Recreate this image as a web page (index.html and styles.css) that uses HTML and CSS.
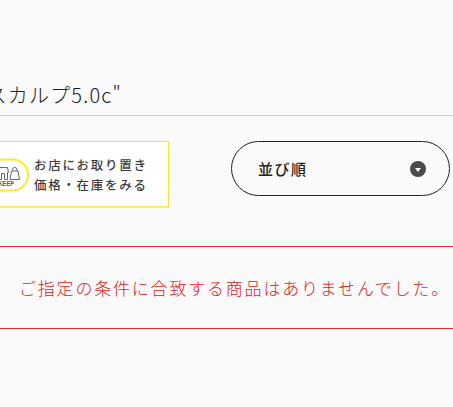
FILE: index.html
```
<!DOCTYPE html>
<html lang="ja">
<head>
    <meta charset="UTF-8">
    <title>検索結果</title>
    <link rel="stylesheet" href="styles.css">
</head>
<body>
    <h1 class="search-title"><span>スカルプ5.0c"</span></h1>

    <div class="toolbar">
        <a class="keep-banner">
            <svg class="keep-icon" viewBox="0 0 30 34" width="30" height="34">
                <rect x="-34" y="1.5" width="62" height="31" rx="15.5" fill="#fff" stroke="#ffe833" stroke-width="2"/>
                <g fill="none" stroke="#666" stroke-width="1">
                    <path d="M-1 9.5H7.5L8.5 14.5H7.5V21.5H4.5V15.5H1.5V21.5H-1"/>
                    <path d="M11.5 13H18L19.5 21.5H10ZM12.5 13V11.5Q12.5 9.5 14.7 9.5T17 11.5V13"/>
                </g>
                <text class="keep-label" x="-1.5" y="28.3" textLength="15.5" lengthAdjust="spacingAndGlyphs">KEEP</text>
            </svg>
            <span class="keep-text">お店にお取り置き<br>価格・在庫をみる</span>
        </a>
        <button class="sort-button">
            <span>並び順</span>
            <svg viewBox="0 0 16 16" width="16" height="16">
                <circle cx="8" cy="8" r="8" fill="#4a4a4a"/>
                <path d="M5 7H11L8 11Z" fill="#fff"/>
            </svg>
        </button>
    </div>

    <p class="no-result">ご指定の条件に合致する商品はありませんでした。</p>
</body>
</html>
```
FILE: styles.css
```
body {
    margin: 0;
    background-color: #fafafa;
    color: #222;
    font-family: "Noto Sans CJK JP", sans-serif;
    overflow: hidden;
}

.search-title {
    display: flex;
    justify-content: flex-end;
    box-sizing: border-box;
    height: 116px;
    margin: 0;
    padding: 80px 331px 0 0;
    border-bottom: 1px solid #ccc;
    font-size: 20px;
    font-weight: 300;
    line-height: 30px;
    letter-spacing: 1.2px;
    white-space: nowrap;
}

.toolbar {
    display: flex;
    justify-content: space-between;
    align-items: flex-start;
    padding: 25px 3px 0 0;
}

/* store pickup banner */
.keep-banner {
    display: flex;
    align-items: center;
    box-sizing: border-box;
    width: 169px;
    height: 67px;
    padding-top: 1px;
    background-color: #fff;
    border: 1px solid #ffe320;
    border-bottom: 2px solid #ffee60;
    border-left: none;
}

.keep-icon {
    flex: none;
}

.keep-label {
    font-family: "Liberation Sans", sans-serif;
    font-size: 6.5px;
    font-weight: bold;
    fill: #555;
}

.keep-text {
    margin-left: 4px;
    padding-top: 1px;
    color: #3c3c3c;
    font-size: 12.5px;
    font-weight: 500;
    line-height: 20px;
    letter-spacing: 1.7px;
    white-space: nowrap;
}

.sort-button {
    display: flex;
    justify-content: space-between;
    align-items: center;
    box-sizing: border-box;
    width: 219px;
    height: 55px;
    padding: 0 23px 0 26px;
    background-color: transparent;
    border: 1px solid #222;
    border-radius: 28px;
    color: #222;
    font-family: inherit;
    font-size: 15px;
    font-weight: 500;
    letter-spacing: 1.5px;
}

.no-result {
    box-sizing: border-box;
    height: 83px;
    margin: 38px 0 0;
    padding-left: 19px;
    border-top: 1px solid #e53030;
    border-bottom: 1px solid #e53030;
    color: #e52020;
    font-size: 17px;
    font-weight: 300;
    line-height: 81px;
    letter-spacing: 1.8px;
    white-space: nowrap;
}
```
